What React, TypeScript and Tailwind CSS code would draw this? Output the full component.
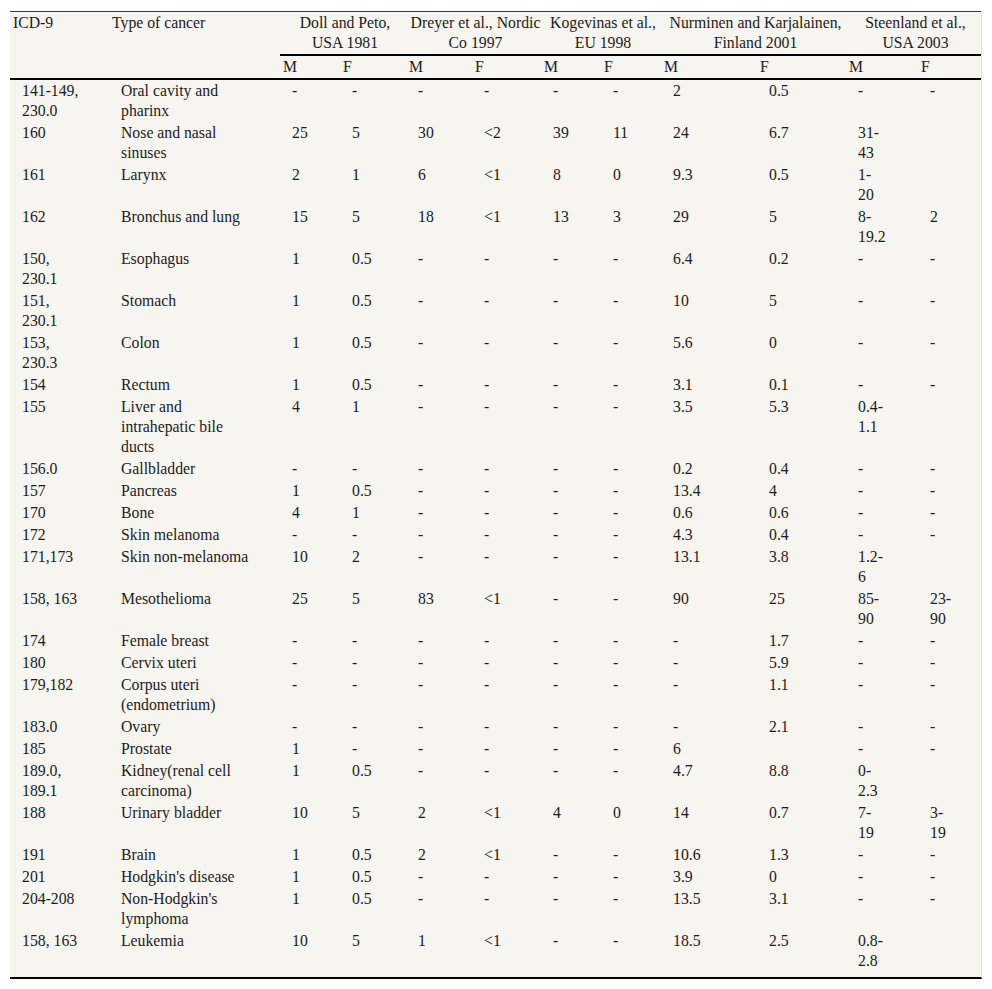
import React from "react";

type Fila = {
  icd: string;
  tipo: string;
  valores: string[];
};

const grupos = [
  "Doll and Peto,\nUSA 1981",
  "Dreyer et al., Nordic\nCo 1997",
  "Kogevinas et al.,\nEU 1998",
  "Nurminen and Karjalainen,\nFinland 2001",
  "Steenland et al.,\nUSA 2003",
];

const anchos = [99, 171, 60, 66, 66, 69, 60, 60, 96, 89, 72, 63];

const filas: Fila[] = [
  { icd: "141-149,\n230.0", tipo: "Oral cavity and\npharinx", valores: ["-", "-", "-", "-", "-", "-", "2", "0.5", "-", "-"] },
  { icd: "160", tipo: "Nose and nasal\nsinuses", valores: ["25", "5", "30", "<2", "39", "11", "24", "6.7", "31-\n43", ""] },
  { icd: "161", tipo: "Larynx", valores: ["2", "1", "6", "<1", "8", "0", "9.3", "0.5", "1-\n20", ""] },
  { icd: "162", tipo: "Bronchus and lung", valores: ["15", "5", "18", "<1", "13", "3", "29", "5", "8-\n19.2", "2"] },
  { icd: "150,\n230.1", tipo: "Esophagus", valores: ["1", "0.5", "-", "-", "-", "-", "6.4", "0.2", "-", "-"] },
  { icd: "151,\n230.1", tipo: "Stomach", valores: ["1", "0.5", "-", "-", "-", "-", "10", "5", "-", "-"] },
  { icd: "153,\n230.3", tipo: "Colon", valores: ["1", "0.5", "-", "-", "-", "-", "5.6", "0", "-", "-"] },
  { icd: "154", tipo: "Rectum", valores: ["1", "0.5", "-", "-", "-", "-", "3.1", "0.1", "-", "-"] },
  { icd: "155", tipo: "Liver and\nintrahepatic bile\nducts", valores: ["4", "1", "-", "-", "-", "-", "3.5", "5.3", "0.4-\n1.1", ""] },
  { icd: "156.0", tipo: "Gallbladder", valores: ["-", "-", "-", "-", "-", "-", "0.2", "0.4", "-", "-"] },
  { icd: "157", tipo: "Pancreas", valores: ["1", "0.5", "-", "-", "-", "-", "13.4", "4", "-", "-"] },
  { icd: "170", tipo: "Bone", valores: ["4", "1", "-", "-", "-", "-", "0.6", "0.6", "-", "-"] },
  { icd: "172", tipo: "Skin melanoma", valores: ["-", "-", "-", "-", "-", "-", "4.3", "0.4", "-", "-"] },
  { icd: "171,173", tipo: "Skin non-melanoma", valores: ["10", "2", "-", "-", "-", "-", "13.1", "3.8", "1.2-\n6", ""] },
  { icd: "158, 163", tipo: "Mesothelioma", valores: ["25", "5", "83", "<1", "-", "-", "90", "25", "85-\n90", "23-\n90"] },
  { icd: "174", tipo: "Female breast", valores: ["-", "-", "-", "-", "-", "-", "-", "1.7", "-", "-"] },
  { icd: "180", tipo: "Cervix uteri", valores: ["-", "-", "-", "-", "-", "-", "-", "5.9", "-", "-"] },
  { icd: "179,182", tipo: "Corpus uteri\n(endometrium)", valores: ["-", "-", "-", "-", "-", "-", "-", "1.1", "-", "-"] },
  { icd: "183.0", tipo: "Ovary", valores: ["-", "-", "-", "-", "-", "-", "-", "2.1", "-", "-"] },
  { icd: "185", tipo: "Prostate", valores: ["1", "-", "-", "-", "-", "-", "6", "", "-", "-"] },
  { icd: "189.0,\n189.1", tipo: "Kidney(renal cell\ncarcinoma)", valores: ["1", "0.5", "-", "-", "-", "-", "4.7", "8.8", "0-\n2.3", ""] },
  { icd: "188", tipo: "Urinary bladder", valores: ["10", "5", "2", "<1", "4", "0", "14", "0.7", "7-\n19", "3-\n19"] },
  { icd: "191", tipo: "Brain", valores: ["1", "0.5", "2", "<1", "-", "-", "10.6", "1.3", "-", "-"] },
  { icd: "201", tipo: "Hodgkin's disease", valores: ["1", "0.5", "-", "-", "-", "-", "3.9", "0", "-", "-"] },
  { icd: "204-208", tipo: "Non-Hodgkin's\nlymphoma", valores: ["1", "0.5", "-", "-", "-", "-", "13.5", "3.1", "-", "-"] },
  { icd: "158, 163", tipo: "Leukemia", valores: ["10", "5", "1", "<1", "-", "-", "18.5", "2.5", "0.8-\n2.8", ""] },
];

// celdas del cuerpo: texto arriba, sangría de 12px
const td = "whitespace-pre-line pl-3 py-[1px] align-top text-left";

export default function App() {
  return (
    <div className="min-h-screen bg-white pt-[11px] pl-[10px]">
      <div className="w-[972px] border-r border-[#e2e2e2] bg-[#f7f5f0] pb-[5px] border-b-2 border-b-black">
        <table
          className="w-[971px] table-fixed border-collapse text-[15.75px] leading-[20px] text-[#1c1c1c]"
          style={{ fontFamily: '"Liberation Serif", "Times New Roman", serif' }}
        >
          <colgroup>
            {anchos.map((w, i) => (
              <col key={i} style={{ width: w }} />
            ))}
          </colgroup>
          <thead>
            <tr className="border-t border-[#3a3a3a]">
              <th rowSpan={2} className="pl-[3px] py-[1px] align-top text-left font-normal">
                ICD-9
              </th>
              <th rowSpan={2} className="pl-[3px] py-[1px] align-top text-left font-normal">
                Type of cancer
              </th>
              {grupos.map((g) => (
                <th
                  key={g}
                  colSpan={2}
                  className="whitespace-pre-line border-b-2 border-black pl-[4px] py-[1px] align-top text-center font-normal"
                >
                  {g}
                </th>
              ))}
            </tr>
            <tr className="border-b-2 border-black">
              {grupos.flatMap((g) => [
                <th key={g + "M"} className="pl-[3px] py-[1px] text-left font-normal">
                  M
                </th>,
                <th key={g + "F"} className="pl-[3px] py-[1px] text-left font-normal">
                  F
                </th>,
              ])}
            </tr>
          </thead>
          <tbody>
            {filas.map((f, i) => (
              <tr key={i}>
                <td className={td}>{f.icd}</td>
                <td className={td}>{f.tipo}</td>
                {f.valores.map((v, j) => (
                  <td key={j} className={td}>
                    {v}
                  </td>
                ))}
              </tr>
            ))}
          </tbody>
        </table>
      </div>
    </div>
  );
}
